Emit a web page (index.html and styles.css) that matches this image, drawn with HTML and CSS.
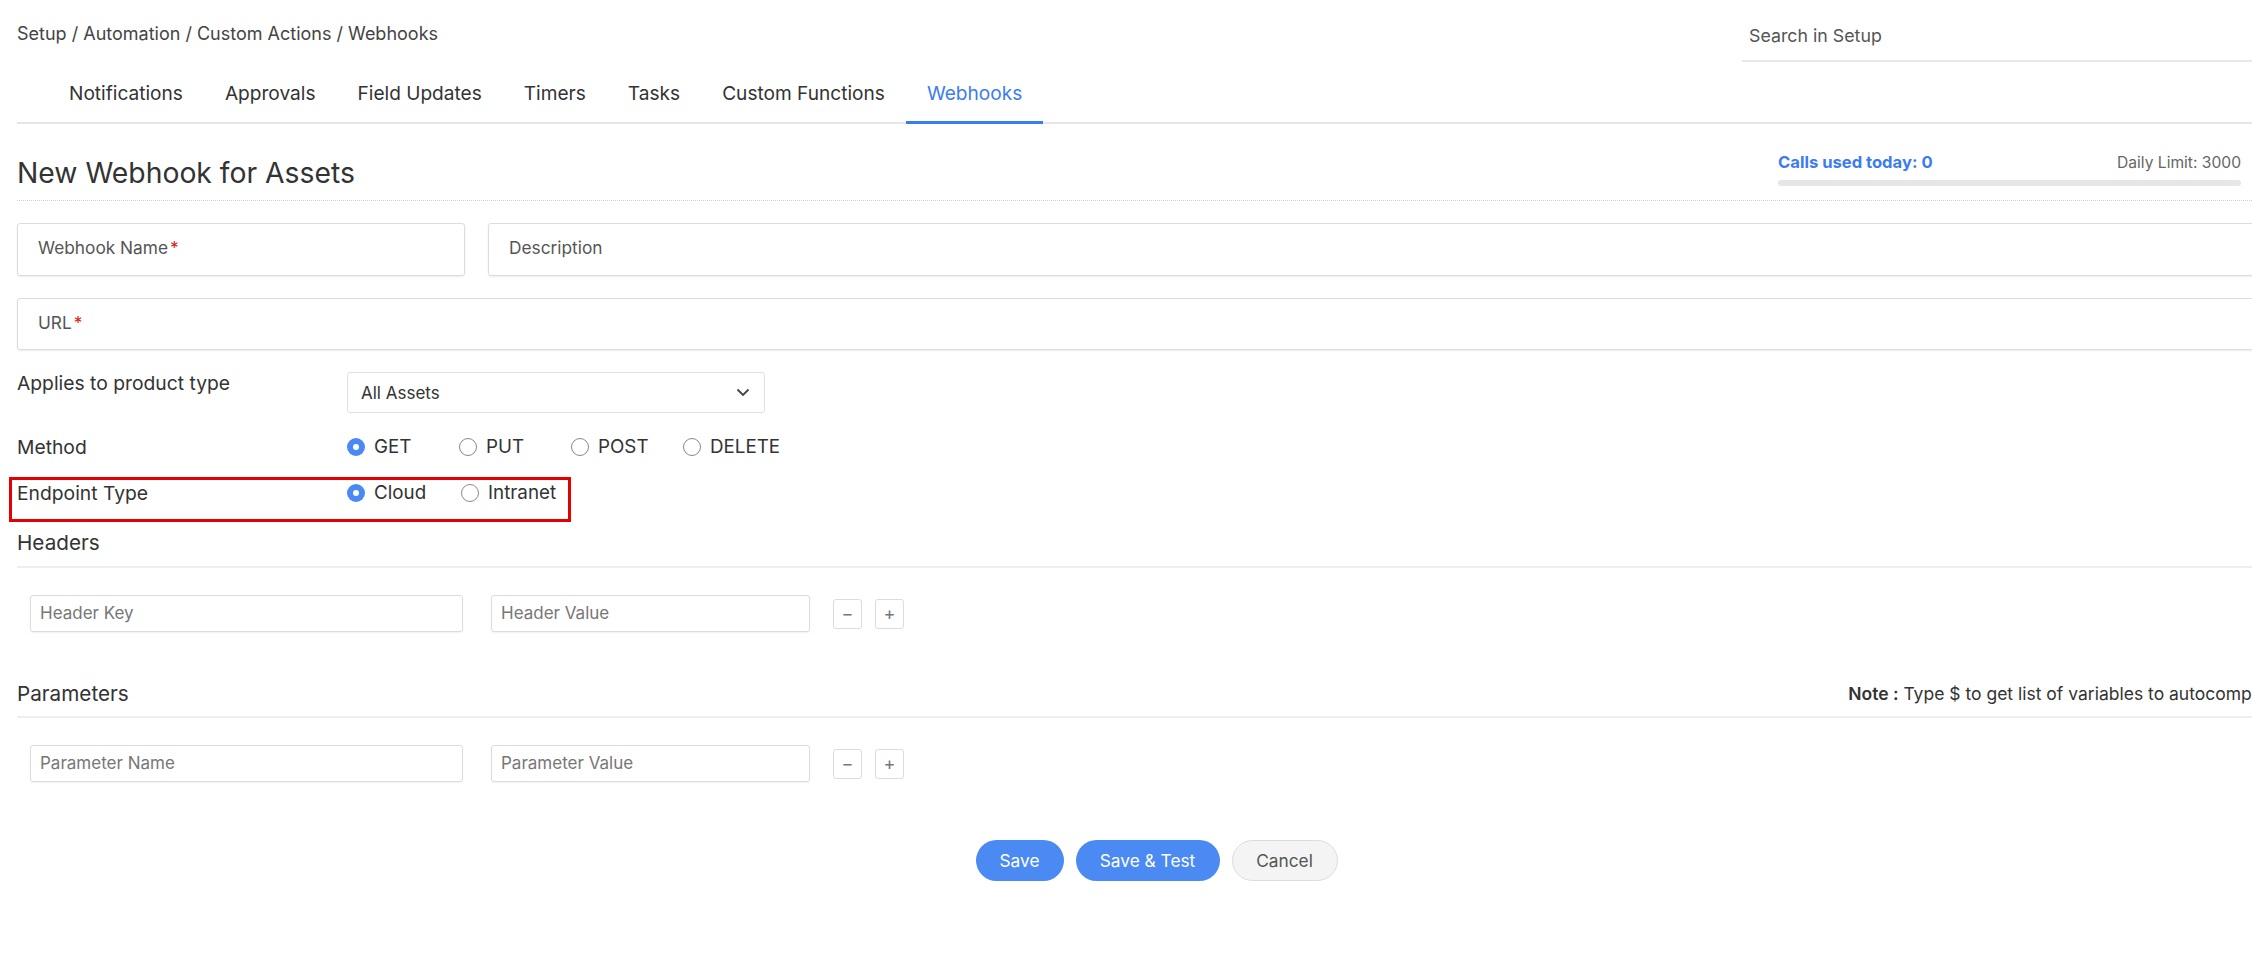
FILE: index.html
```html
<!DOCTYPE html>
<html>
<head>
<meta charset="utf-8">
<link rel="stylesheet" href="styles.css">
</head>
<body>
<div class="page">
  <header class="topbar">
    <div class="crumbs">Setup / Automation / Custom Actions / Webhooks</div>
    <div class="search">Search in Setup</div>
  </header>
  <nav class="tabs">
    <div class="tab">Notifications</div>
    <div class="tab">Approvals</div>
    <div class="tab">Field Updates</div>
    <div class="tab">Timers</div>
    <div class="tab">Tasks</div>
    <div class="tab">Custom Functions</div>
    <div class="tab active">Webhooks</div>
  </nav>
  <div class="title-row">
    <h1>New Webhook for Assets</h1>
    <div class="usage">
      <div class="usage-top"><span class="used">Calls used today: 0</span><span class="limit">Daily Limit: 3000</span></div>
      <div class="bar"></div>
    </div>
  </div>
  <div class="form">
    <div class="row-fields">
      <div class="field name">Webhook Name<span class="req">*</span></div>
      <div class="field desc">Description</div>
    </div>
    <div class="field url">URL<span class="req">*</span></div>

    <div class="opt-row">
      <div class="opt-label">Applies to product type</div>
      <div class="select">
        <span>All Assets</span>
        <svg class="chev" width="14" height="9" viewBox="0 0 14 9"><polyline points="1.5,1.5 7,7 12.5,1.5" fill="none" stroke="#444" stroke-width="1.8"/></svg>
      </div>
    </div>
    <div class="opt-row">
      <div class="opt-label lh">Method</div>
      <div class="radios">
        <div class="radio"><span class="dot on"></span>GET</div>
        <div class="radio"><span class="dot"></span>PUT</div>
        <div class="radio"><span class="dot"></span>POST</div>
        <div class="radio"><span class="dot"></span>DELETE</div>
      </div>
    </div>
    <div class="opt-row endpoint">
      <div class="opt-label lh">Endpoint Type</div>
      <div class="radios">
        <div class="radio"><span class="dot on"></span>Cloud</div>
        <div class="radio"><span class="dot"></span>Intranet</div>
      </div>
      <div class="highlight"></div>
    </div>

    <div class="section-head">
      <h2>Headers</h2>
    </div>
    <div class="kv">
      <div class="kbox">Header Key</div>
      <div class="vbox">Header Value</div>
      <div class="sq minus">−</div>
      <div class="sq plus">+</div>
    </div>

    <div class="section-head params">
      <h2>Parameters</h2>
      <div class="note"><b>Note :</b> Type $ to get list of variables to autocomplete</div>
    </div>
    <div class="kv">
      <div class="kbox">Parameter Name</div>
      <div class="vbox">Parameter Value</div>
      <div class="sq minus">−</div>
      <div class="sq plus">+</div>
    </div>

    <div class="actions">
      <div class="btn primary save">Save</div>
      <div class="btn primary savetest">Save &amp; Test</div>
      <div class="btn cancel">Cancel</div>
    </div>
  </div>
</div>
</body>
</html>
```
FILE: styles.css
```css
html, body {
  margin: 0;
  padding: 0;
  overflow: hidden;
  background: #ffffff;
}
body {
  font-family: Inter, "Open Sans", "Liberation Sans", sans-serif;
  color: #333333;
}
.page {
  width: 2279px;
  margin-left: 17px;
}
.topbar {
  display: flex;
  justify-content: space-between;
  height: 71px;
}
.crumbs {
  margin-top: 23px;
  font-size: 18px;
  line-height: 22px;
  color: #444444;
}
.search {
  width: 554px;
  height: 62px;
  box-sizing: border-box;
  padding: 25px 0 0 7px;
  font-size: 17.8px;
  line-height: 22px;
  color: #555555;
  border-bottom: 2px solid #e8e8e8;
}
.tabs {
  display: flex;
  height: 51px;
  padding-left: 31px;
  border-bottom: 2px solid #e6e6e6;
}
.tab {
  height: 53px;
  box-sizing: border-box;
  margin-bottom: -2px;
  padding: 0 21px;
  font-size: 19.1px;
  line-height: 44px;
  color: #333333;
}
.tab.active {
  color: #3b7cf0;
  border-bottom: 3px solid #3b7cf0;
}
.title-row {
  display: flex;
  justify-content: space-between;
  align-items: flex-start;
  height: 76px;
  padding-right: 55px;
  border-bottom: 1px dotted #cfcfcf;
}
.title-row h1 {
  margin: 31px 0 0;
  font-size: 28.3px;
  font-weight: 400;
  line-height: 36px;
  color: #333333;
}
.usage {
  width: 463px;
  margin-top: 28px;
}
.usage-top {
  display: flex;
  justify-content: space-between;
  align-items: baseline;
  line-height: 20px;
}
.used {
  font-size: 16.6px;
  font-weight: 700;
  color: #3b7cf0;
}
.limit {
  font-size: 15.6px;
  color: #666666;
}
.bar {
  margin-top: 7px;
  height: 6px;
  border-radius: 3px;
  background: #e6e6e6;
}
.form {
  padding-top: 22px;
}
.row-fields {
  display: flex;
  gap: 23px;
}
.field {
  height: 53px;
  box-sizing: border-box;
  padding: 13px 0 0 20px;
  border: 1px solid #dcdcdc;
  border-radius: 3px;
  box-shadow: 0 1px 2px rgba(0, 0, 0, 0.08);
  font-size: 17.3px;
  line-height: 22px;
  color: #555555;
}
.field.name {
  width: 448px;
}
.field.desc {
  flex: 1;
}
.field.url {
  margin-top: 22px;
  height: 52px;
}
.req {
  color: #e02020;
  margin-left: 2px;
}
.opt-row {
  display: flex;
  align-items: flex-start;
  margin-top: 22px;
}
.opt-label {
  width: 330px;
  font-size: 19.3px;
  line-height: 22px;
  color: #333333;
}
.opt-label.lh {
  line-height: 24px;
}
.select {
  width: 418px;
  height: 41px;
  box-sizing: border-box;
  display: flex;
  align-items: center;
  justify-content: space-between;
  padding: 0 14px 0 13px;
  border: 1px solid #e0e0e0;
  border-radius: 3px;
  font-size: 17px;
  color: #333333;
}
.radios {
  display: flex;
}
.radio {
  width: 112px;
  display: flex;
  align-items: center;
  gap: 9px;
  font-size: 18.8px;
  line-height: 24px;
  color: #333333;
}
.radios .radio:first-child + .radio:last-child {
  width: auto;
}
.dot {
  width: 18px;
  height: 18px;
  box-sizing: border-box;
  border-radius: 50%;
  border: 1px solid #8a8a8a;
  background: #ffffff;
}
.dot.on {
  border: none;
  box-shadow: inset 0 0 0 6px #4a89f3;
}
.endpoint .radio:first-child {
  width: 114px;
}
.endpoint {
  position: relative;
}
.highlight {
  position: absolute;
  left: -8px;
  top: -4px;
  width: 562px;
  height: 45px;
  box-sizing: border-box;
  border: 3px solid #e30000;
}
.section-head {
  display: flex;
  justify-content: space-between;
  align-items: flex-end;
  margin-top: 25px;
  padding-bottom: 10px;
  border-bottom: 2px solid #eeeeee;
}
.section-head.params {
  margin-top: 49px;
  padding-bottom: 9px;
}
.section-head h2 {
  margin: 0;
  font-size: 20.7px;
  font-weight: 400;
  line-height: 26px;
  color: #333333;
}
.note {
  padding-right: 14px;
  padding-bottom: 3px;
  font-size: 17.5px;
  color: #333333;
}
.note b {
  font-weight: 600;
}
.kv {
  display: flex;
  align-items: center;
  padding-left: 13px;
  margin-top: 27px;
}
.kbox, .vbox {
  height: 37px;
  box-sizing: border-box;
  padding-left: 9px;
  border: 1px solid #dcdcdc;
  border-radius: 3px;
  box-shadow: 0 1px 2px rgba(0, 0, 0, 0.06);
  font-size: 17px;
  line-height: 35px;
  color: #777777;
}
.kbox {
  width: 433px;
}
.vbox {
  width: 319px;
  margin-left: 28px;
}
.sq {
  width: 29px;
  height: 30px;
  box-sizing: border-box;
  border: 1px solid #dcdcdc;
  border-radius: 3px;
  display: flex;
  align-items: center;
  justify-content: center;
  font-size: 18px;
  color: #777777;
}
.sq.minus {
  margin-left: 23px;
}
.sq.plus {
  margin-left: 13px;
}
.actions {
  display: flex;
  justify-content: center;
  gap: 12px;
  margin-top: 58px;
}
.btn {
  height: 41px;
  box-sizing: border-box;
  border-radius: 21px;
  display: flex;
  align-items: center;
  justify-content: center;
  font-size: 17.3px;
}
.btn.primary {
  background: #4a8af2;
  color: #ffffff;
}
.btn.save {
  width: 88px;
}
.btn.savetest {
  width: 144px;
}
.btn.cancel {
  width: 106px;
  background: #f4f4f4;
  border: 1px solid #dcdcdc;
  color: #555555;
}
```
